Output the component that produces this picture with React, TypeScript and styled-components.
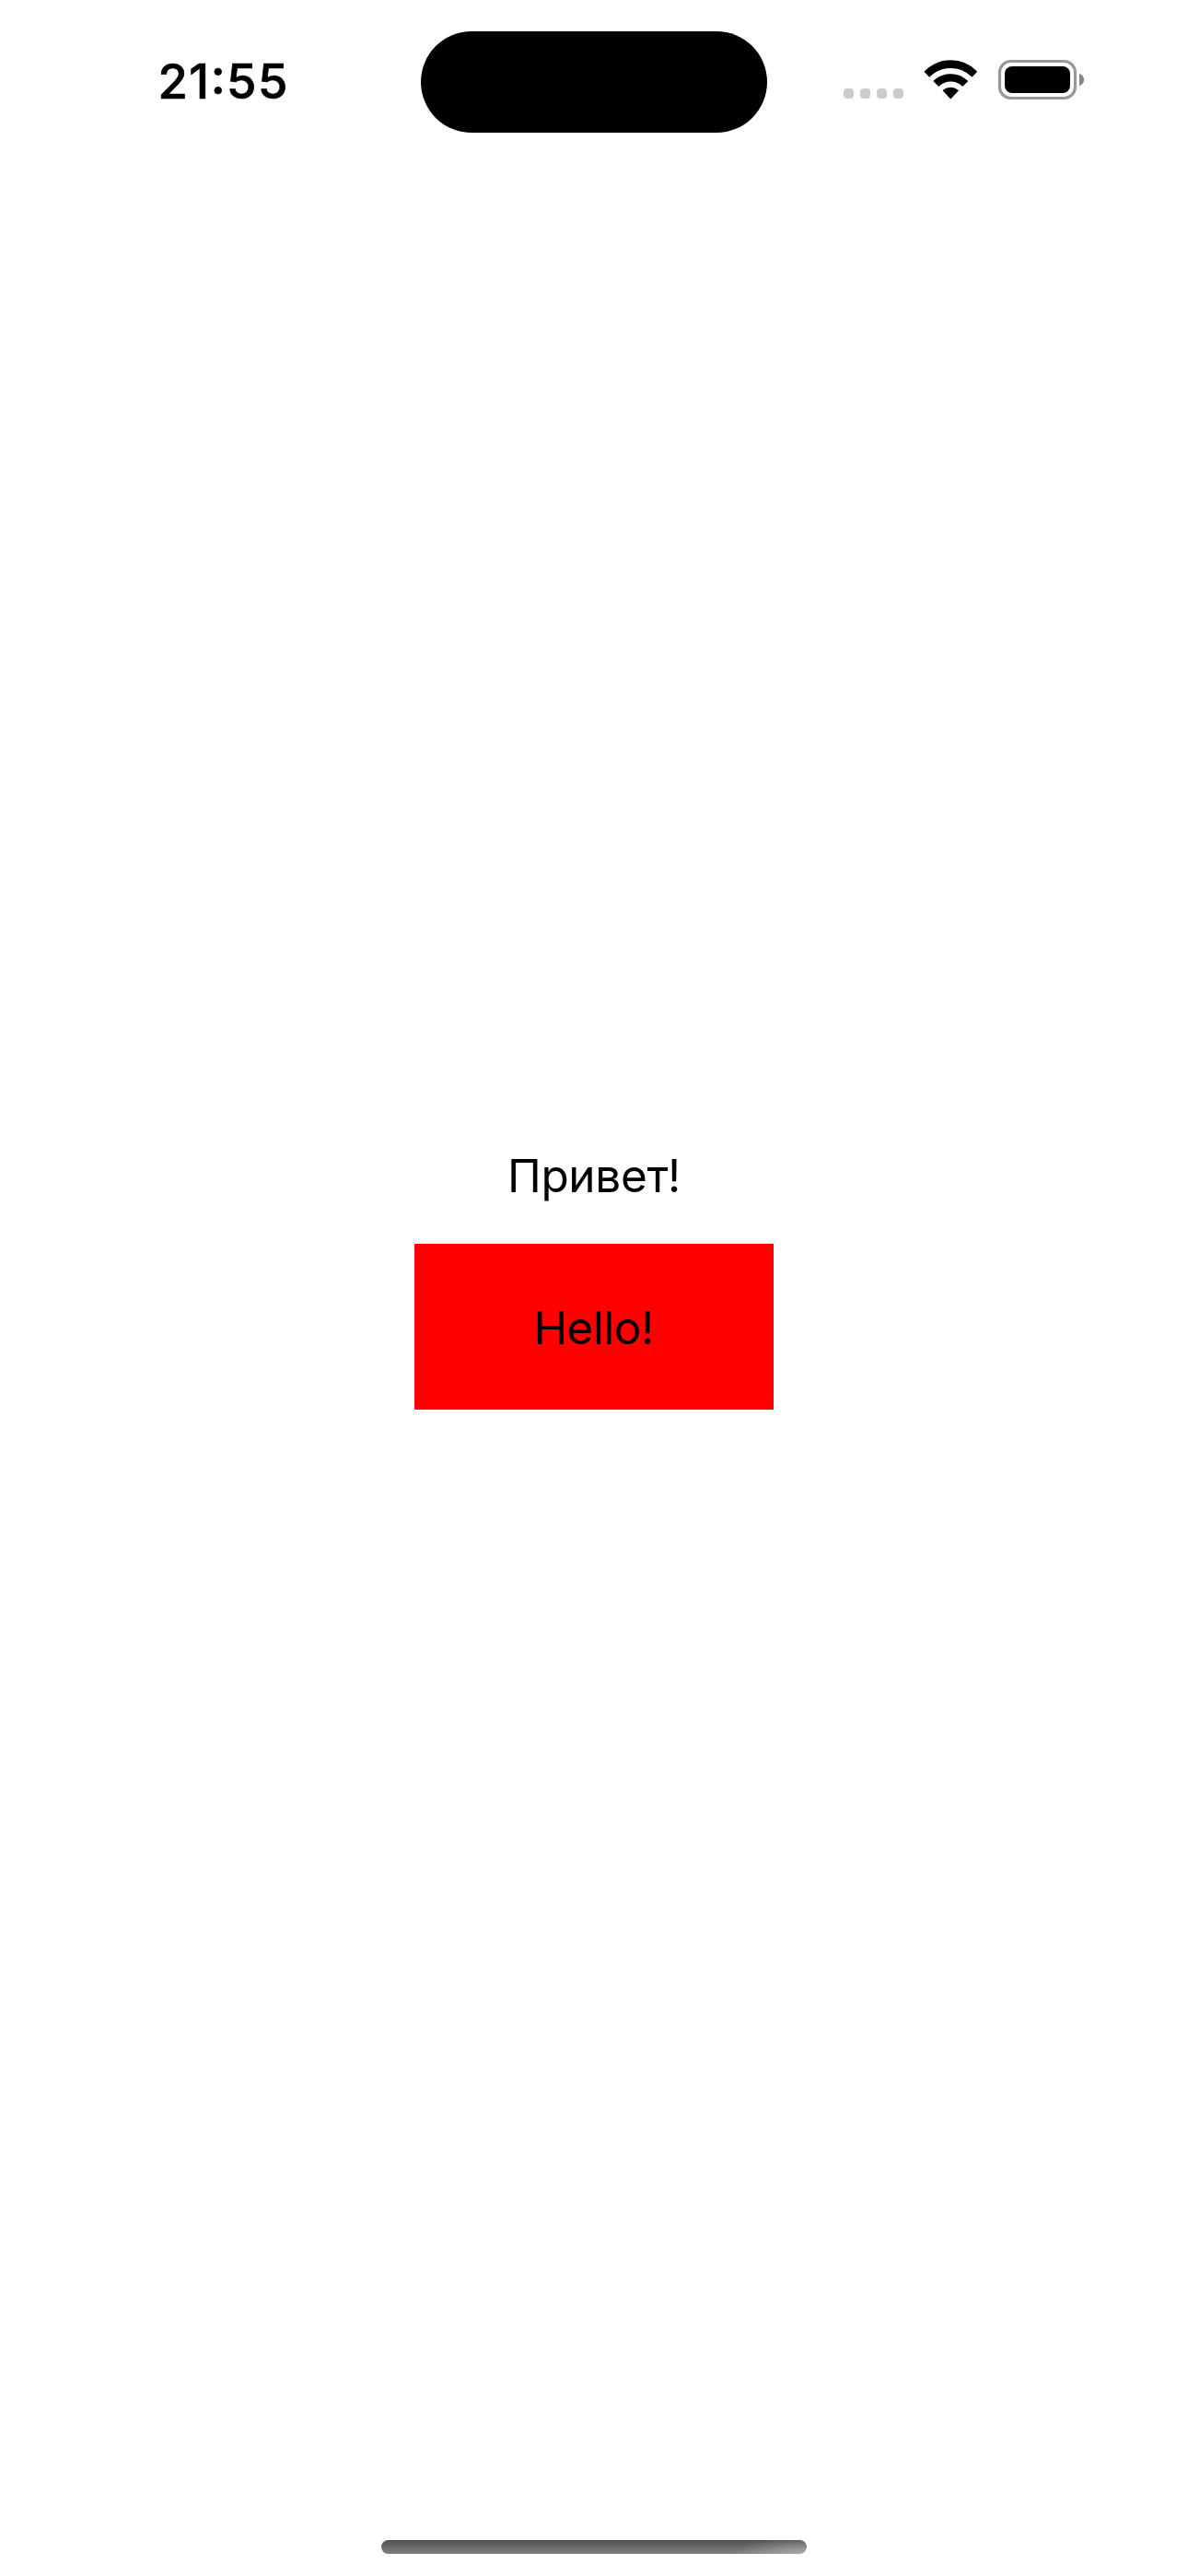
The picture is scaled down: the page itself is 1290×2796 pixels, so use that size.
import React from "react";
import styled, { createGlobalStyle } from "styled-components";

const GlobalStyle = createGlobalStyle`
  * { box-sizing: border-box; }
  body {
    margin: 0;
    background: #fff;
    color: #000;
    font-family: Inter, "Liberation Sans", sans-serif;
  }
`;

const Screen = styled.div`
  width: 1290px;
  height: 2796px;
  display: flex;
  flex-direction: column;
  background: #fff;
  overflow: hidden;
`;

const StatusBar = styled.header`
  height: 177px;
  flex: none;
  display: grid;
  grid-template-columns: 457px 376px 457px;
  align-items: start;
`;

const Clock = styled.time`
  margin: 58px 0 0 171.5px;
  font-size: 52.5px;
  line-height: 60px;
  font-weight: 500;
  letter-spacing: 1.5px;
  -webkit-text-stroke: 0.7px #000;
  font-feature-settings: "case" 1;
  white-space: nowrap;
`;

const Island = styled.div`
  height: 110px;
  margin-top: 34px;
  border-radius: 55px;
  background: #000;
`;

const Indicators = styled.div`
  display: flex;
  align-items: flex-start;
  padding: 64px 0 0 83px;
`;

const Signal = styled.div`
  display: flex;
  gap: 7px;
  margin: 32px 22px 0 0;
`;

const SignalDot = styled.span`
  width: 11px;
  height: 11px;
  border-radius: 4px;
  background: #cbcbcb;
`;

const WifiIcon = styled.svg`
  width: 60px;
  height: 44px;
  margin-right: 20px;
`;

const BatteryIcon = styled.svg`
  width: 96px;
  height: 46px;
`;

const Content = styled.main`
  flex: 1;
  display: flex;
  flex-direction: column;
  align-items: center;
  padding-top: 1069px;
`;

const Label = styled.span<{ $tracking: number }>`
  font-size: 49.5px;
  line-height: 60px;
  font-weight: 400;
  letter-spacing: ${(p) => p.$tracking}px;
  white-space: nowrap;
`;

const RedBox = styled.div`
  width: 390px;
  height: 180px;
  margin-top: 44px;
  padding: 2px 1px 0 0;
  display: flex;
  align-items: center;
  justify-content: center;
  background: #f00;
`;

const HomeArea = styled.footer`
  display: flex;
  justify-content: center;
  padding-bottom: 24px;
`;

const HomeIndicator = styled.div`
  width: 462px;
  height: 15px;
  border-radius: 7.5px;
  background:
    radial-gradient(ellipse 80px 18px at 100% 100%, rgba(190, 190, 190, 0.7), rgba(190, 190, 190, 0)),
    linear-gradient(#505050, #808080);
`;

export default function App() {
  return (
    <Screen>
      <GlobalStyle />
      <StatusBar>
        <Clock>21:55</Clock>
        <Island />
        <Indicators>
          <Signal>
            {[0, 1, 2, 3].map((i) => (
              <SignalDot key={i} />
            ))}
          </Signal>
          <WifiIcon viewBox="1003 64 60 44" stroke="#000" strokeWidth="1.4" strokeLinejoin="round">
            <path d="M1004.4 77.8A39 39 0 0 1 1060.2 77.8L1055.4 82.7A33 33 0 0 0 1009.2 82.7Z" />
            <path d="M1014.3 88.1A26 26 0 0 1 1050.3 88.1L1045.2 93.1A18.5 18.5 0 0 0 1019.4 93.1Z" />
            <path d="M1024.5 98.3A12 12 0 0 1 1040.1 98.3L1032.3 106.4Z" />
          </WifiIcon>
          <BatteryIcon viewBox="1083 64 96 46">
            <rect x="1085.5" y="66.5" width="82" height="40" rx="12" fill="none" stroke="#999" strokeWidth="3.2" />
            <rect x="1091" y="72" width="71" height="29" rx="8" />
            <path d="M1172 80C1175.3 81 1177 83.5 1177 86.5S1175.3 92 1172 93.3Z" fill="#858585" />
          </BatteryIcon>
        </Indicators>
      </StatusBar>
      <Content>
        <Label $tracking={-0.35}>Привет!</Label>
        <RedBox>
          <Label $tracking={-0.55}>Hello!</Label>
        </RedBox>
      </Content>
      <HomeArea>
        <HomeIndicator />
      </HomeArea>
    </Screen>
  );
}
